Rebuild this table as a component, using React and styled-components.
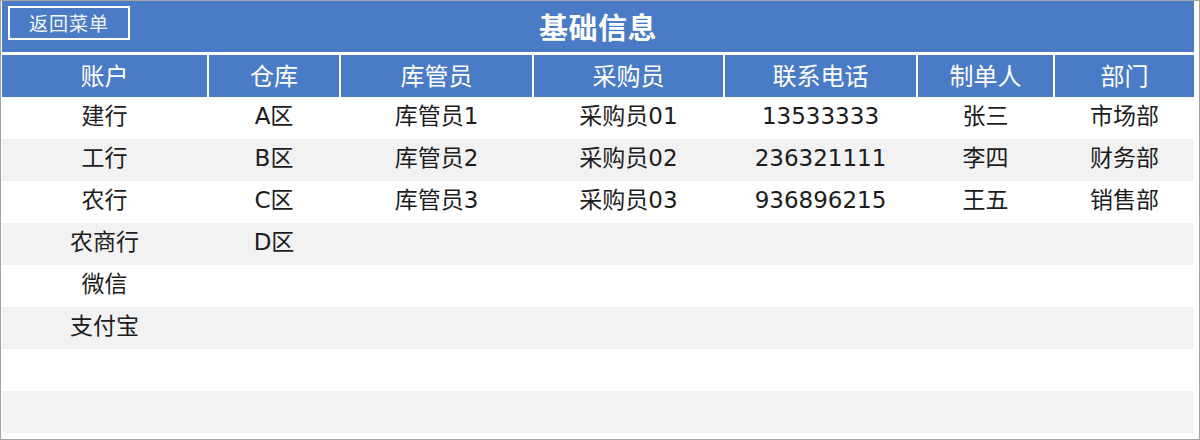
import React from 'react';
import styled, { createGlobalStyle } from 'styled-components';

const GlobalStyle = createGlobalStyle`
  html, body {
    margin: 0;
    padding: 0;
    background: #ffffff;
  }
  * {
    box-sizing: border-box;
  }
`;

const BLUE = '#4a7bc6';
const COLUMNS = '205px 130px 191px 189px 191px 135px 1fr';
const FONT = `"DejaVu Sans", "Noto Sans CJK SC", sans-serif`;

const Frame = styled.div`
  width: 1200px;
  height: 440px;
  border: 1px solid #a3a3a3;
  padding: 0 5px 0 1px;
  background: #ffffff;
  font-family: ${FONT};
  overflow: hidden;
`;

const TitleBar = styled.div`
  position: relative;
  height: 51px;
  background: ${BLUE};
  display: flex;
  align-items: center;
  justify-content: center;
`;

const BackButton = styled.button`
  position: absolute;
  left: 6px;
  top: 5px;
  width: 122px;
  height: 34px;
  padding: 0 0 2px;
  border: 2px solid #ffffff;
  background: transparent;
  color: #f4f6fb;
  font-family: "Noto Sans CJK SC", sans-serif;
  font-size: 19px;
  line-height: 1;
  letter-spacing: 1px;
  cursor: pointer;
`;

const Title = styled.h1`
  margin: 0 0 2px;
  color: #ffffff;
  font-family: "Noto Sans CJK SC", sans-serif;
  font-size: 29px;
  font-weight: 700;
  letter-spacing: 0.5px;
`;

const HeaderRow = styled.div`
  display: grid;
  grid-template-columns: ${COLUMNS};
  column-gap: 2px;
  margin-top: 3px;
  height: 42px;
`;

const HeaderCell = styled.div`
  background: ${BLUE};
  color: #ffffff;
  font-family: "Noto Sans CJK SC", sans-serif;
  font-size: 24px;
  display: flex;
  align-items: center;
  justify-content: center;
  padding-bottom: 3px;
`;

const Row = styled.div`
  display: grid;
  grid-template-columns: ${COLUMNS};
  column-gap: 2px;
  height: 42px;
  background: ${({ $shaded }) => ($shaded ? '#f2f2f2' : '#ffffff')};
`;

const Cell = styled.div`
  color: #1c1c1c;
  font-size: 23px;
  line-height: 38px;
  text-align: center;
  white-space: nowrap;
`;

const headers = ['账户', '仓库', '库管员', '采购员', '联系电话', '制单人', '部门'];

const rows = [
  ['建行', 'A区', '库管员1', '采购员01', '13533333', '张三', '市场部'],
  ['工行', 'B区', '库管员2', '采购员02', '236321111', '李四', '财务部'],
  ['农行', 'C区', '库管员3', '采购员03', '936896215', '王五', '销售部'],
  ['农商行', 'D区', '', '', '', '', ''],
  ['微信', '', '', '', '', '', ''],
  ['支付宝', '', '', '', '', '', ''],
  ['', '', '', '', '', '', ''],
  ['', '', '', '', '', '', ''],
];

export default function App() {
  return (
    <>
      <GlobalStyle />
      <Frame>
        <TitleBar>
          <BackButton>返回菜单</BackButton>
          <Title>基础信息</Title>
        </TitleBar>
        <HeaderRow>
          {headers.map(h => (
            <HeaderCell key={h}>{h}</HeaderCell>
          ))}
        </HeaderRow>
        {rows.map((row, i) => (
          <Row key={i} $shaded={i % 2 === 1}>
            {row.map((value, j) => (
              <Cell key={j}>{value}</Cell>
            ))}
          </Row>
        ))}
      </Frame>
    </>
  );
}
